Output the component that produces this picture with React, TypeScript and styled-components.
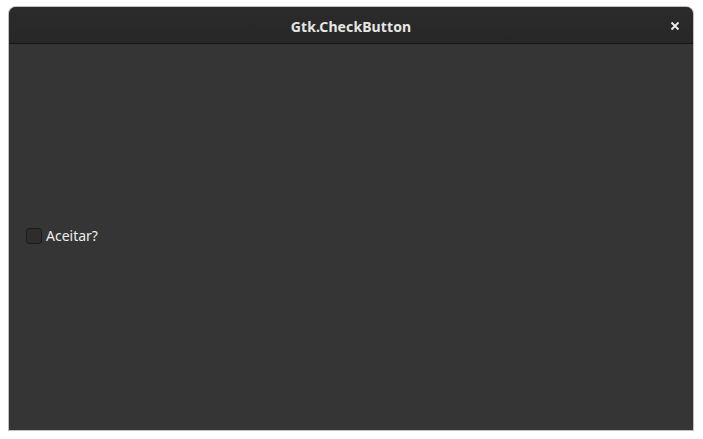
import styled, { createGlobalStyle } from 'styled-components';

const GlobalStyle = createGlobalStyle`
  html, body {
    margin: 0;
    padding: 0;
    background: #ffffff;
  }
  body {
    font-family: 'Noto Sans', 'DejaVu Sans', sans-serif;
  }
`;

const App: React.FC = () => {
  return (
    <>
      <GlobalStyle />
      <Page>
        <Window>
          <HeaderBar>
            <Title>Gtk.CheckButton</Title>
            <CloseButton aria-label="Fechar">
              <svg width="10" height="10" viewBox="0 0 10 10">
                <path
                  d="M1.5 1.5 L8.5 8.5 M8.5 1.5 L1.5 8.5"
                  stroke="#eeeeec"
                  strokeWidth="1.8"
                  strokeLinecap="butt"
                />
              </svg>
            </CloseButton>
          </HeaderBar>
          <Content>
            <CheckLabel>
              <CheckBox type="checkbox" />
              <LabelText>Aceitar?</LabelText>
            </CheckLabel>
          </Content>
        </Window>
      </Page>
    </>
  );
};

const Page = styled.div`
  display: flex;
  padding: 7px 9px 0 9px;
  height: 439px;
  box-sizing: border-box;
`;

const Window = styled.div`
  display: flex;
  flex-direction: column;
  width: 684px;
  height: 423px;
  border-radius: 7px 7px 0 0;
  overflow: hidden;
  background: #353535;
  box-shadow: 0 0 0 1px rgba(0, 0, 0, 0.25);
`;

const HeaderBar = styled.div`
  position: relative;
  display: flex;
  align-items: center;
  justify-content: center;
  height: 37px;
  padding-top: 2px;
  box-sizing: border-box;
  flex-shrink: 0;
  background: linear-gradient(#2b2b2b, #272727);
  border-bottom: 1px solid #151515;
`;

const Title = styled.span`
  color: #e6e6e4;
  font-size: 14px;
  font-weight: 700;
  letter-spacing: 0.1px;
`;

const CloseButton = styled.button`
  position: absolute;
  right: 9px;
  top: 10px;
  width: 18px;
  height: 18px;
  padding: 0;
  border: none;
  background: transparent;
  display: flex;
  align-items: center;
  justify-content: center;
`;

const Content = styled.div`
  flex: 1;
  display: flex;
  align-items: center;
  padding-left: 17px;
  padding-bottom: 3px;
`;

const CheckLabel = styled.label`
  display: flex;
  align-items: center;
  gap: 4px;
`;

const CheckBox = styled.input`
  appearance: none;
  margin: 0;
  width: 16px;
  height: 16px;
  box-sizing: border-box;
  border: 1px solid #1b1b1b;
  border-radius: 3px;
  background: #2d2d2d;
`;

const LabelText = styled.span`
  color: #eeeeec;
  font-size: 14px;
`;

export default App;
